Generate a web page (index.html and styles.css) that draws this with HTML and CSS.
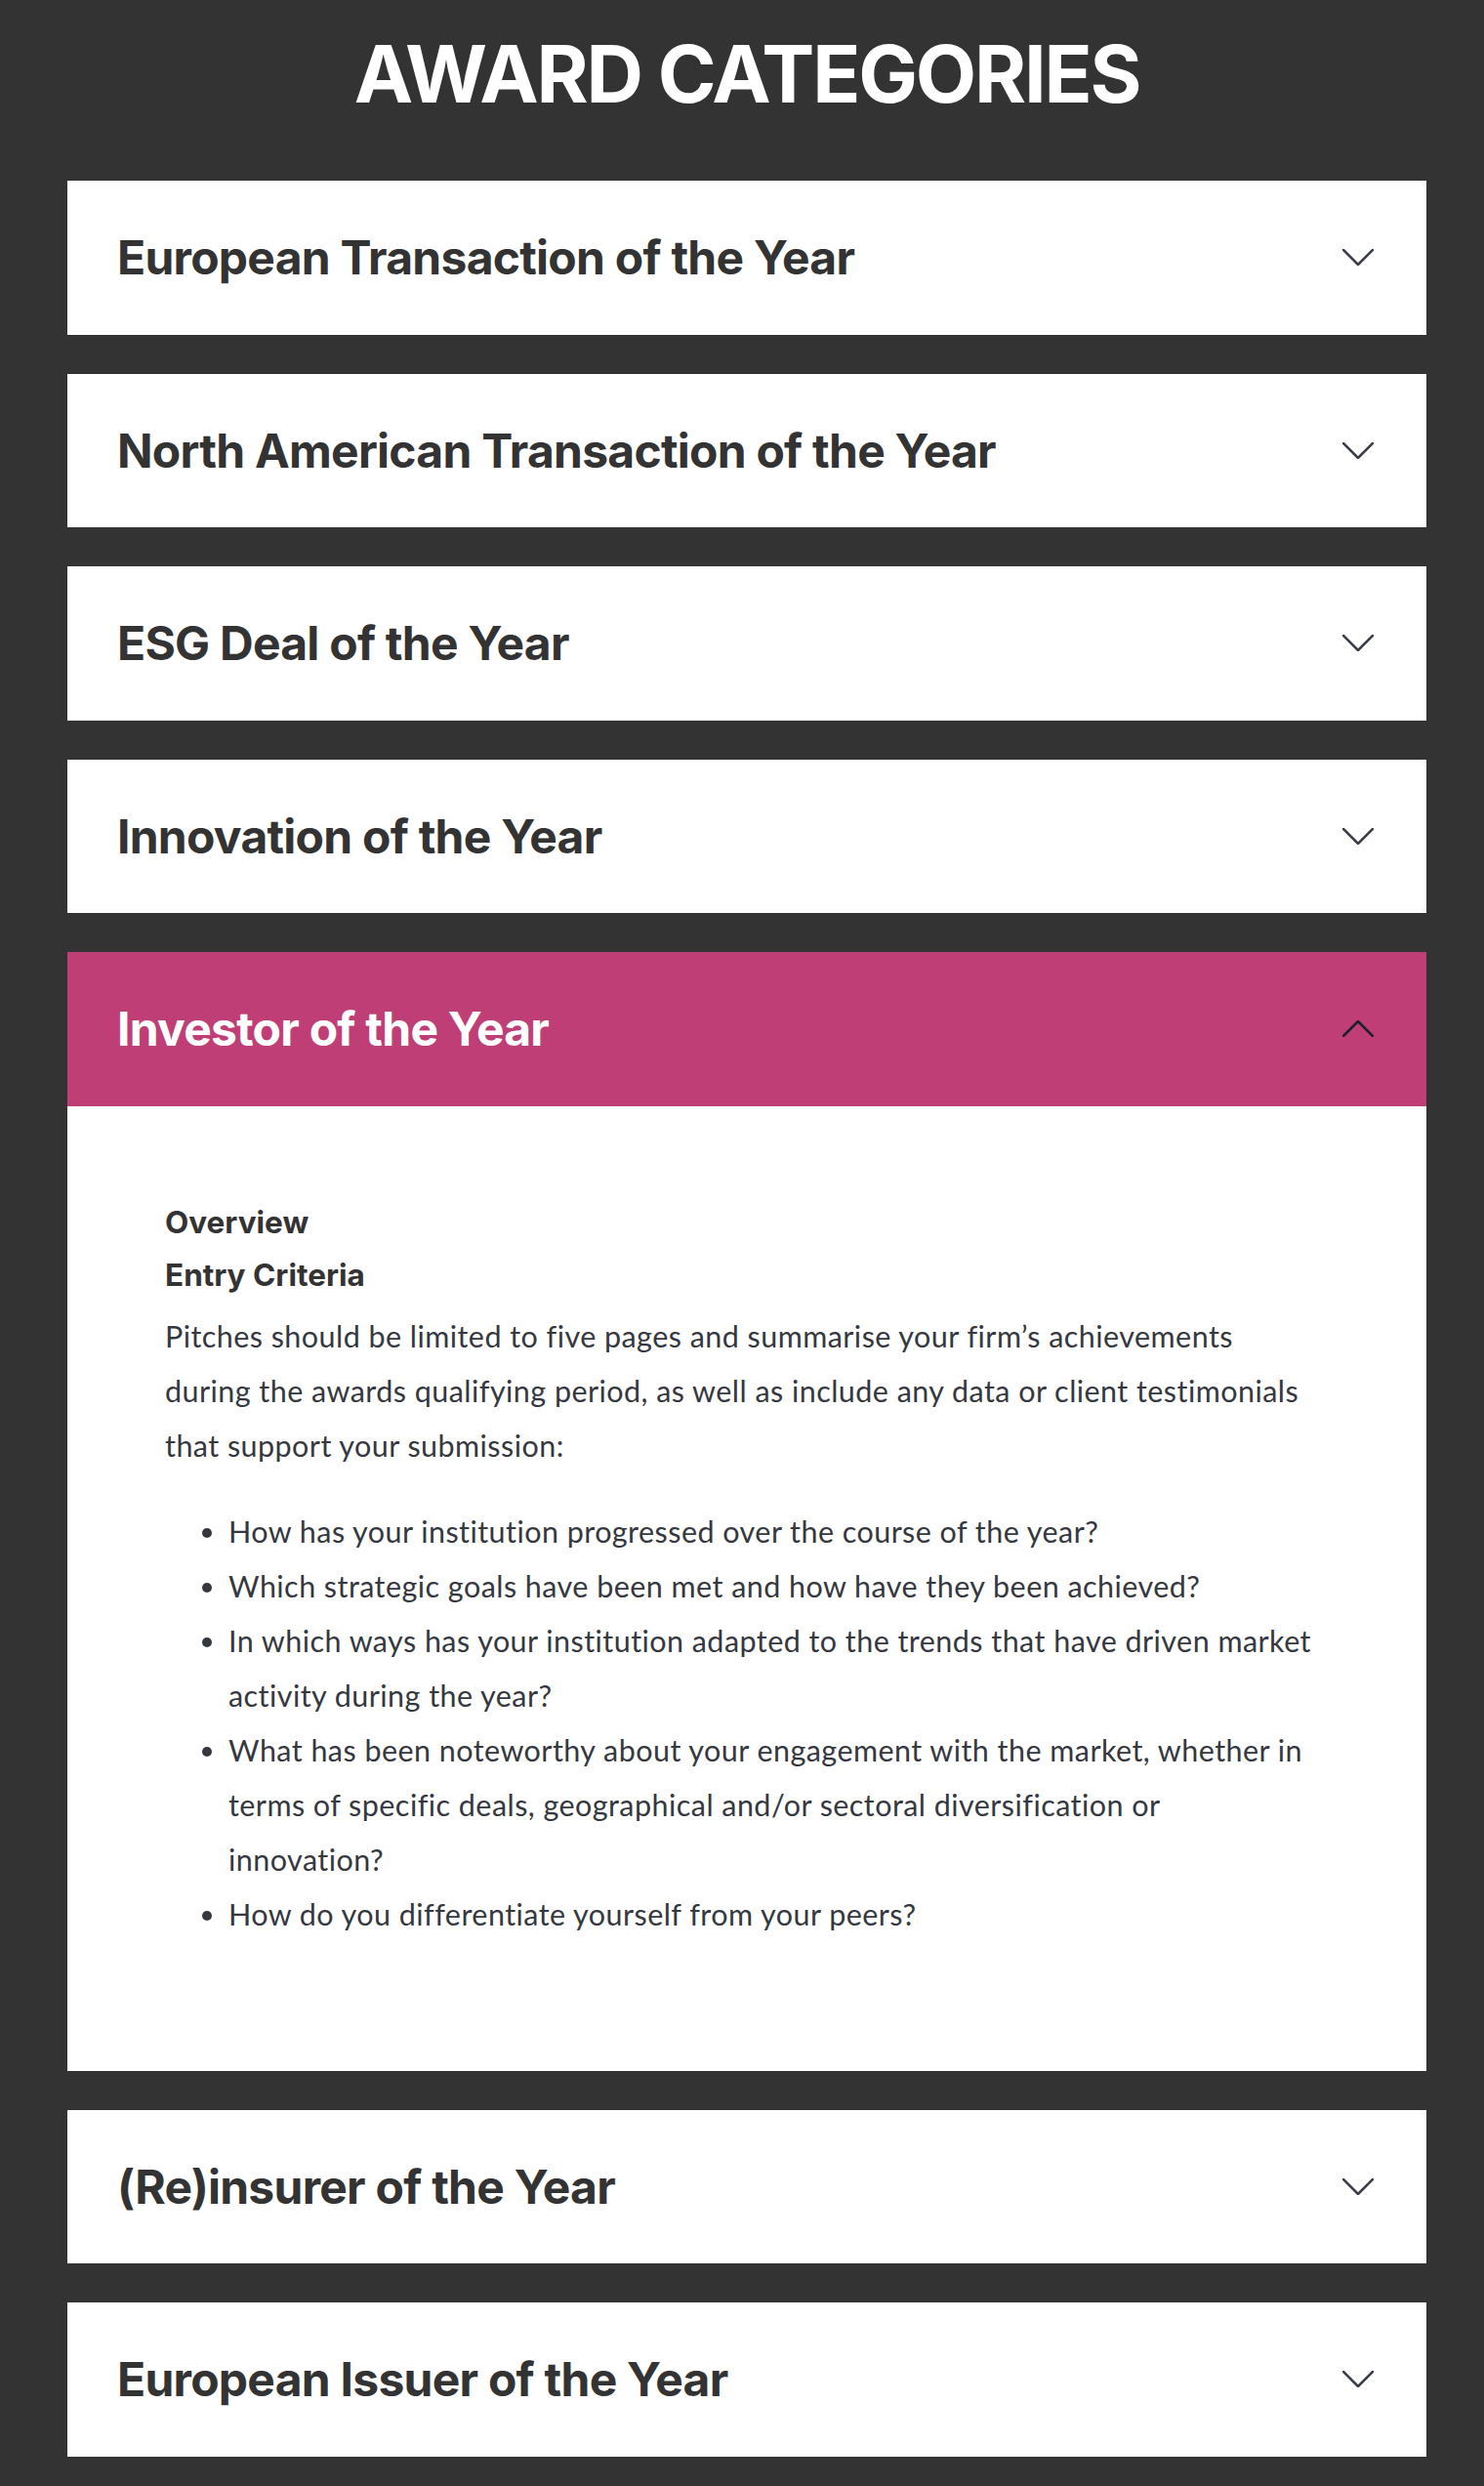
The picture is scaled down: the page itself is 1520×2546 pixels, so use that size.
FILE: index.html
```html
<!DOCTYPE html>
<html lang="en">
<head>
<meta charset="utf-8">
<title>Award Categories</title>
<link rel="stylesheet" href="styles.css">
</head>
<body>
<main class="page">
  <h1 class="page-title">AWARD CATEGORIES</h1>
  <div class="accordion">
    <section class="item">
      <div class="item-head">
        <h2 class="item-title">European Transaction of the Year</h2>
        <svg class="chevron" viewBox="0 0 32 17" width="32" height="17"><polyline points="1,1 16,16 31,1"/></svg>
      </div>
    </section>
    <section class="item">
      <div class="item-head">
        <h2 class="item-title">North American Transaction of the Year</h2>
        <svg class="chevron" viewBox="0 0 32 17" width="32" height="17"><polyline points="1,1 16,16 31,1"/></svg>
      </div>
    </section>
    <section class="item">
      <div class="item-head">
        <h2 class="item-title">ESG Deal of the Year</h2>
        <svg class="chevron" viewBox="0 0 32 17" width="32" height="17"><polyline points="1,1 16,16 31,1"/></svg>
      </div>
    </section>
    <section class="item">
      <div class="item-head">
        <h2 class="item-title">Innovation of the Year</h2>
        <svg class="chevron" viewBox="0 0 32 17" width="32" height="17"><polyline points="1,1 16,16 31,1"/></svg>
      </div>
    </section>
    <section class="item item-open">
      <div class="item-head">
        <h2 class="item-title">Investor of the Year</h2>
        <svg class="chevron" viewBox="0 0 32 17" width="32" height="17"><polyline points="1,16 16,1 31,16"/></svg>
      </div>
      <div class="item-body">
        <h3 class="sub">Overview</h3>
        <h3 class="sub">Entry Criteria</h3>
        <p class="text">Pitches should be limited to five pages and summarise your firm’s achievements during the awards qualifying period, as well as include any data or client testimonials that support your submission:</p>
        <ul class="list">
          <li>How has your institution progressed over the course of the year?</li>
          <li>Which strategic goals have been met and how have they been achieved?</li>
          <li>In which ways has your institution adapted to the trends that have driven market activity during the year?</li>
          <li>What has been noteworthy about your engagement with the market, whether in terms of specific deals, geographical and/or sectoral diversification or innovation?</li>
          <li>How do you differentiate yourself from your peers?</li>
        </ul>
      </div>
    </section>
    <section class="item">
      <div class="item-head">
        <h2 class="item-title">(Re)insurer of the Year</h2>
        <svg class="chevron" viewBox="0 0 32 17" width="32" height="17"><polyline points="1,1 16,16 31,1"/></svg>
      </div>
    </section>
    <section class="item">
      <div class="item-head">
        <h2 class="item-title">European Issuer of the Year</h2>
        <svg class="chevron" viewBox="0 0 32 17" width="32" height="17"><polyline points="1,1 16,16 31,1"/></svg>
      </div>
    </section>
  </div>
</main>
</body>
</html>
```

FILE: styles.css
```css
html, body {
  margin: 0;
  padding: 0;
  background: #333333;
}

.page {
  margin: 0 59px 0 69px;
  padding-bottom: 30px;
  font-family: Inter, "Liberation Sans", sans-serif;
}

.page-title {
  margin: 0;
  padding: 36px 0 68px;
  font-size: 81px;
  line-height: 81px;
  font-weight: 700;
  letter-spacing: -2.2px;
  color: #ffffff;
  text-align: center;
}

.accordion {
  display: flex;
  flex-direction: column;
  gap: 40px;
}

.item {
  background: #ffffff;
}

.item-head {
  height: 157.5px;
  display: flex;
  align-items: center;
  justify-content: space-between;
  padding: 0 54px 0 51px;
  box-sizing: border-box;
}

.item-title {
  margin: 0;
  font-size: 48px;
  font-weight: 700;
  letter-spacing: -0.75px;
  color: #333333;
}

.chevron {
  display: block;
  fill: none;
  stroke: #3b3e47;
  stroke-width: 2.6;
  stroke-linecap: square;
}

.item-open .item-head {
  background: #c03e76;
}

.item-open .item-title {
  color: #ffffff;
}

.item-open .chevron {
  stroke: #1c1f2e;
}

.item-body {
  padding: 99px 110px 100px 100px;
  color: #35383f;
}

.sub {
  margin: 0 0 15px;
  font-size: 31.5px;
  font-weight: 700;
  line-height: normal;
  color: #333333;
}

.text {
  margin: 0 0 32px;
  font-family: Lato, "Liberation Sans", sans-serif;
  font-size: 30.5px;
  letter-spacing: 0.45px;
  line-height: 56px;
}

.list {
  margin: 0 0 33px;
  padding-left: 65px;
  font-family: Lato, "Liberation Sans", sans-serif;
  font-size: 30.5px;
  letter-spacing: 0.45px;
  line-height: 56px;
}
```
